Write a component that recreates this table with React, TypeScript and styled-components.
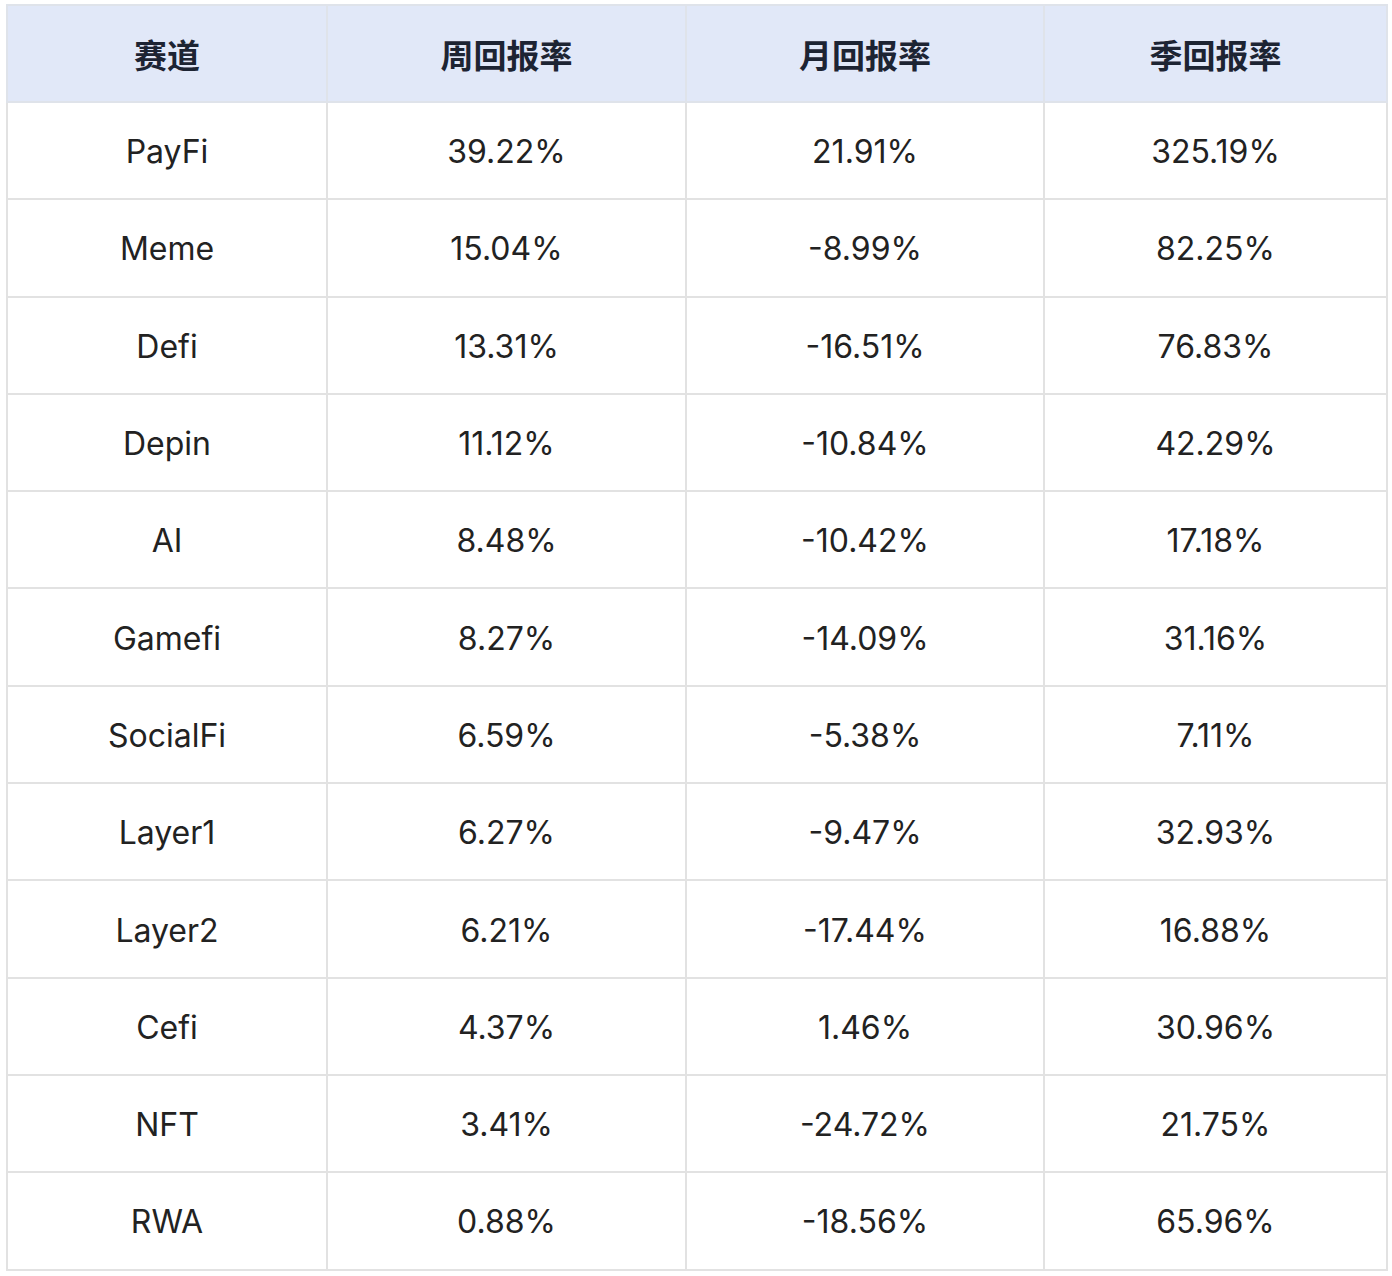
import React, { FunctionComponent } from "react";
import styled, { createGlobalStyle } from "styled-components";

const GlobalStyle = createGlobalStyle`
  body {
    margin: 0;
    background: #fff;
    font-family: Inter, "Noto Sans CJK SC", sans-serif;
    color: #1f1f1f;
  }
`;

const Page = styled.div`
  padding: 4px 6px;
`;

const Table = styled.table`
  width: 1380px;
  border-collapse: collapse;
  table-layout: fixed;
`;

const Col = styled.col<{ $w: number }>`
  width: ${(p) => p.$w}px;
`;

const HeadCell = styled.th`
  height: 95px;
  background: #e1e8f8;
  border: 2px solid #dfe3ea;
  font-size: 33px;
  font-weight: 700;
  color: #1d2433;
  font-family: "Noto Sans CJK SC", sans-serif;
  text-align: center;
  padding: 0;
`;

const Cell = styled.td`
  height: 93.3px;
  border: 2px solid #e2e2e2;
  font-size: 32px;
  font-weight: 400;
  text-align: center;
  padding: 2px 0 0;
  color: #222;
`;

const widths = [320, 359, 358, 343];

const rows: [string, string, string, string][] = [
  ["PayFi", "39.22%", "21.91%", "325.19%"],
  ["Meme", "15.04%", "-8.99%", "82.25%"],
  ["Defi", "13.31%", "-16.51%", "76.83%"],
  ["Depin", "11.12%", "-10.84%", "42.29%"],
  ["AI", "8.48%", "-10.42%", "17.18%"],
  ["Gamefi", "8.27%", "-14.09%", "31.16%"],
  ["SocialFi", "6.59%", "-5.38%", "7.11%"],
  ["Layer1", "6.27%", "-9.47%", "32.93%"],
  ["Layer2", "6.21%", "-17.44%", "16.88%"],
  ["Cefi", "4.37%", "1.46%", "30.96%"],
  ["NFT", "3.41%", "-24.72%", "21.75%"],
  ["RWA", "0.88%", "-18.56%", "65.96%"],
];

const App: FunctionComponent = () => (
  <Page>
    <GlobalStyle />
    <Table>
      <colgroup>
        {widths.map((w, i) => (
          <Col key={i} $w={w} />
        ))}
      </colgroup>
      <thead>
        <tr>
          <HeadCell>赛道</HeadCell>
          <HeadCell>周回报率</HeadCell>
          <HeadCell>月回报率</HeadCell>
          <HeadCell>季回报率</HeadCell>
        </tr>
      </thead>
      <tbody>
        {rows.map((r) => (
          <tr key={r[0]}>
            {r.map((v, i) => (
              <Cell key={i}>{v}</Cell>
            ))}
          </tr>
        ))}
      </tbody>
    </Table>
  </Page>
);

export default App;
